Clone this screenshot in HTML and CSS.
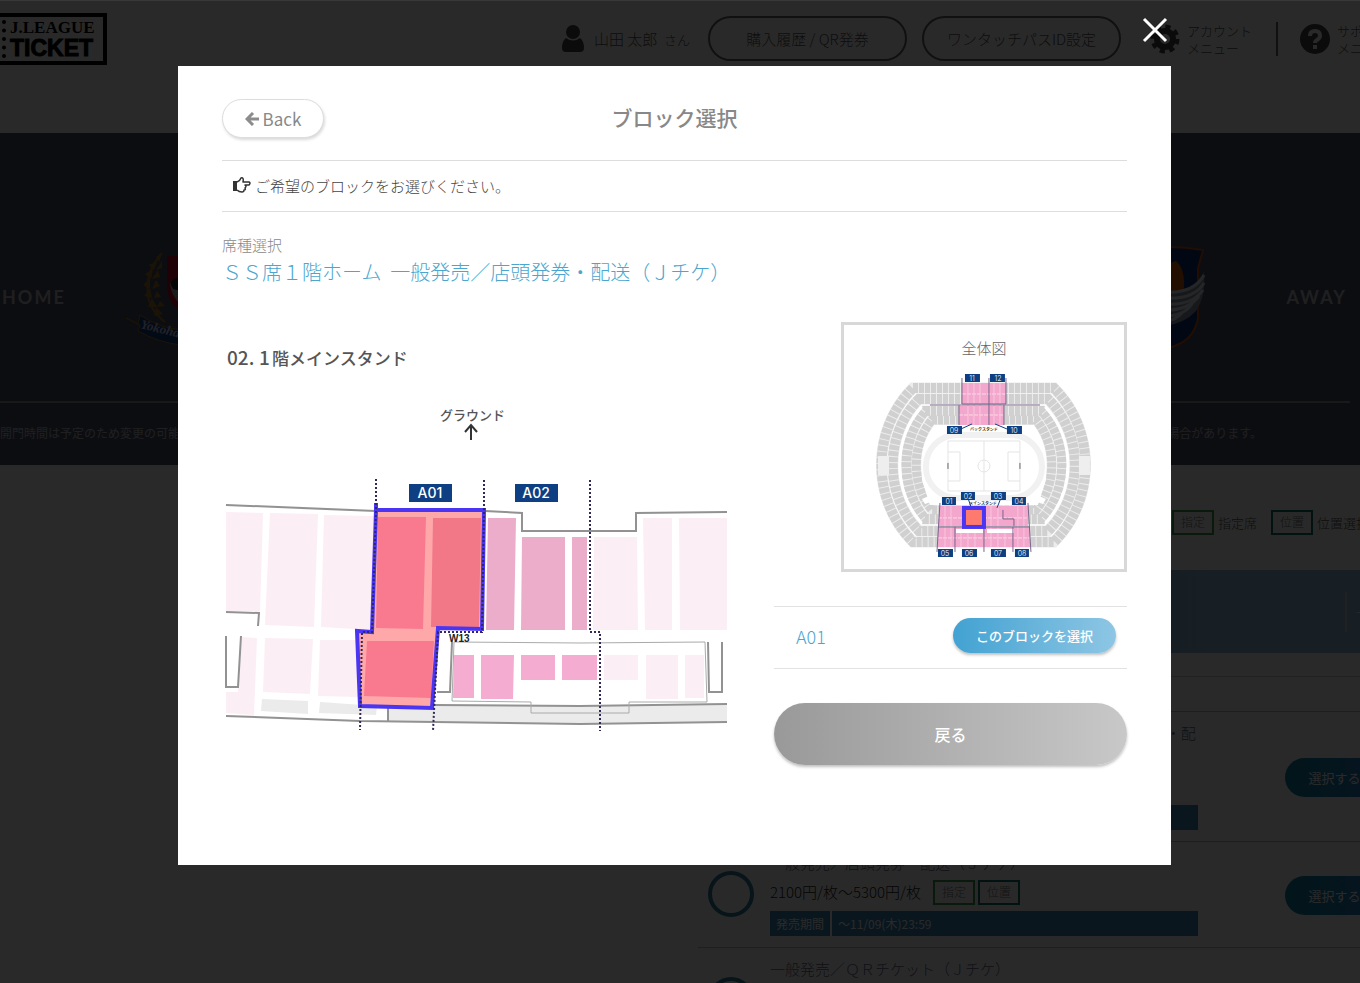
FILE: index.html
```html
<!DOCTYPE html>
<html lang="ja">
<head>
    <meta charset="UTF-8">
    <meta name="viewport" content="width=device-width, initial-scale=1.0">
    <title>ブロック選択</title>
    <link rel="stylesheet" href="styles.css">
</head>
<body>
    <div class="page">
        <header class="header">
            <a class="logo" href="#">
                <span class="logo-dots"></span>
                <span class="logo-text">
                    <span class="logo-top">J.LEAGUE</span>
                    <span class="logo-bottom">TICKET</span>
                </span>
            </a>
            <nav class="menu">
                <span class="user">
                    <svg width="22" height="28" viewBox="0 0 22 28"><circle cx="11" cy="7" r="7"/><path d="M4 13Q11 18 18 13Q22 16 22 23Q22 27 18 27H4Q0 27 0 23Q0 16 4 13Z"/></svg>
                    <span>山田 太郎&nbsp; <small>さん</small></span>
                </span>
                <a class="pill" href="#">購入履歴 / QR発券</a>
                <a class="pill" href="#">ワンタッチパスID設定</a>
                <a class="menu-item account" href="#">
                    <svg width="30" height="30" viewBox="0 0 30 30"><circle cx="15" cy="15" r="8" fill="none" stroke="#444" stroke-width="6"/><circle cx="15" cy="15" r="12" fill="none" stroke="#444" stroke-width="5" stroke-dasharray="5 4.42"/></svg>
                    <span>アカウント<br>メニュー</span>
                </a>
                <a class="menu-item support" href="#">
                    <svg width="30" height="30" viewBox="0 0 30 30"><circle cx="15" cy="15" r="15"/><path d="M10 12Q10 7 15 7T20 12Q20 14 17 16Q15 17 15 19" fill="none" stroke="#fff" stroke-width="4"/><path d="M13 21h4v4h-4z" fill="#fff"/></svg>
                    <span>サポート<br>メニュー</span>
                </a>
            </nav>
        </header>

        <section class="match">
            <div class="teams">
                <div class="team">
                    <span class="team-side">HOME</span>
                    <svg width="100" height="96" viewBox="125 250 100 96">
                        <path d="M161 254C142 275 140 305 164 323" fill="none" stroke="#a87820" stroke-width="2"/>
                        <path d="M161 254l-6 4 3 5zM156 262l-8 4 5 5zM152 270l-8 5 6 5zM149 279l-7 7 7 4zM149 289l-6 8 8 2zM151 299l-4 9 9 0zM155 308l-2 9 9-2zM161 262l0 7-6 2zM157 271l2 7-8 2zM155 281l4 6-8 3zM156 292l4 6-7 1zM159 302l5 5-8 1z" fill="#a87820"/>
                        <path d="M166 257h38v30q0 20-19 28q-19-8-19-28z" fill="#c4102a"/>
                        <path d="M169 285q16-14 32 0q-2 16-16 24q-14-8-16-24z" fill="#aaa"/>
                        <circle cx="176" cy="285" r="6" fill="#222"/>
                        <path d="M125 319l12 6 2-9q40 27 80 4l6 20q-45 16-88-8l2-6z" fill="#10408c" stroke="#a87820"/>
                        <text x="139" y="329" transform="rotate(14 139 329)" class="ribbon">Yokohama</text>
                    </svg>
                </div>
                <div class="team">
                    <svg width="76" height="106" viewBox="1130 248 76 106">
                        <path d="M1134 254q34-6 69 0l-5 18v50q-4 24-30 30q-28-6-30-30v-50z" fill="#0c2c78" stroke="#c85018" stroke-width="2"/>
                        <path d="M1160 270l16-5q12 10 6 40l-14 16z" fill="#d86010"/>
                        <path d="M1164 296Q1194 296 1204 276Q1206 300 1196 315Q1184 328 1164 330Z" fill="#8c98a8"/>
                        <g fill="none" stroke="#e0e8f0" stroke-width="3"><path d="M1164 296q30 2 40-17M1164 302q30 2 40-15M1164 308q28 2 39-14M1164 314q24 1 35-14M1164 320q20 0 28-12M1164 326q12-2 18-9"/></g>
                    </svg>
                    <span class="team-side">AWAY</span>
                </div>
            </div>
            <div class="match-notes">
                <span>開門時間は予定のため変更の可能</span>
                <span>場合があります。</span>
            </div>
        </section>

        <main class="tickets">
            <div class="legend">
                <span class="chip chip-seat">指定</span><span class="legend-text">指定席</span>
                <span class="chip chip-pos">位置</span><span class="legend-text">位置選択</span>
            </div>
            <div class="band"><span>＋</span></div>
            <div class="spacer"></div>

            <div class="ticket">
                <input type="radio" name="ticket" id="ticket1">
                <div class="ticket-body">
                    <label class="ticket-name" for="ticket1">ＳＳ席１階ホーム／ＳＳ席２階ホーム&nbsp;&nbsp;一般発売／店頭発券・配送（Ｊチケ）</label>
                    <div class="ticket-price">2100円/枚～5300円/枚 <span class="chip chip-seat">指定</span><span class="chip chip-pos">位置</span></div>
                    <div class="period"><span>発売期間</span><span>～11/09(木)23:59</span></div>
                </div>
                <button class="select-button">選択する</button>
            </div>

            <div class="ticket">
                <input type="radio" name="ticket" id="ticket2">
                <div class="ticket-body">
                    <label class="ticket-name" for="ticket2">一般発売／店頭発券・配送（Ｊチケ）</label>
                    <div class="ticket-price">2100円/枚～5300円/枚 <span class="chip chip-seat">指定</span><span class="chip chip-pos">位置</span></div>
                    <div class="period"><span>発売期間</span><span>～11/09(木)23:59</span></div>
                </div>
                <button class="select-button">選択する</button>
            </div>

            <div class="ticket">
                <input type="radio" name="ticket" id="ticket3">
                <div class="ticket-body">
                    <label class="ticket-name" for="ticket3">一般発売／ＱＲチケット（Ｊチケ）</label>
                    <div class="ticket-price">2100円/枚～5300円/枚</div>
                    <div class="period"><span>発売期間</span><span>～11/09(木)23:59</span></div>
                </div>
            </div>
        </main>
    </div>

    <div class="overlay">
        <div class="modal" role="dialog" aria-labelledby="modal-title">
            <button class="close" aria-label="閉じる">
                <svg width="26" height="26" viewBox="0 0 26 26"><path d="M2 2L24 24M24 2L2 24" stroke="#fff" stroke-width="3"/></svg>
            </button>

            <div class="modal-header">
                <button class="back">
                    <svg width="14" height="14" viewBox="0 0 14 14"><path d="M8 1L2 7L8 13M2 7H14" fill="none" stroke="#8c8c8c" stroke-width="3"/></svg>
                    Back
                </button>
                <h1 id="modal-title">ブロック選択</h1>
            </div>

            <p class="notice">
                <svg width="18" height="16" viewBox="0 0 18 16"><path d="M0 4h4v10H0z" fill="#333"/><path d="M4 5Q7 4 8 1Q11 0 10 5H16Q18 6 16 8H12Q14 9 12 11Q13 13 11 13Q11 15 9 15Q6 15 4 13" fill="none" stroke="#333" stroke-width="1.5" stroke-linejoin="round"/></svg>
                ご希望のブロックをお選びください。
            </p>

            <p class="seat-label">席種選択</p>
            <h2 class="seat-name">ＳＳ席１階ホーム&nbsp; 一般発売／店頭発券・配送（Ｊチケ）</h2>

            <div class="content">
                <!-- stand map -->
                <svg class="stand-map" viewBox="222 322 505 418">
                    <g class="map-text">
                        <text x="227" y="365" font-size="19">02.</text>
                        <text x="259" y="365" font-size="19">1</text>
                        <text x="272" y="365" font-size="17">階メインスタンド</text>
                        <text x="440" y="420" font-size="13">グラウンド</text>
                    </g>
                    <path d="M471 440V426M465 432L471 425L477 432" fill="none" stroke="#333" stroke-width="2"/>

                    <g fill="#fceef5">
                        <path d="M226 512L263 513L260 611H226Z"/>
                        <path d="M270 513L318 514L314 627L265 625Z"/>
                        <path d="M324 515L374 516L371 630L321 627Z"/>
                        <path d="M242 637L257 638L254 715L226 713V692H238Z"/>
                        <path d="M265 638L313 639L310 694L263 692Z"/>
                        <path d="M320 640H357L358 697L318 696Z"/>
                        <path d="M594 537H637L638 630H593Z"/>
                        <path d="M643 518H672V630H645Z"/>
                        <path d="M679 518H727V630H680Z"/>
                        <path d="M604 655H638V680H604Z"/>
                        <path d="M646 655H678V699H646Z"/>
                        <path d="M685 655H704V698H685Z"/>
                    </g>
                    <g fill="#ebebeb">
                        <path d="M262 699L308 701V714L261 711Z"/>
                        <path d="M320 702L377 706L376 715L319 713Z"/>
                        <path d="M388 703L434 705L580 706L727 704V722L580 724L388 722Z"/>
                    </g>
                    <g fill="#ebadca">
                        <path d="M488 518H516L514 630H486Z"/>
                        <path d="M522 537H565V630H521Z"/>
                        <path d="M572 537H587V630H572Z"/>
                    </g>
                    <g fill="#f5acd1">
                        <path d="M454 655H474V698H453Z"/>
                        <path d="M481 655H514L513 699H481Z"/>
                        <path d="M521 655H555V680H521Z"/>
                        <path d="M562 655H597V680H562Z"/>
                    </g>

                    <g fill="none" stroke="#929292" stroke-width="2">
                        <path d="M226 505L376 511H485L522 513V531H636V513L727 512"/>
                        <path d="M226 612L259 613L258 626M226 636V687H238L241 636"/>
                        <path d="M226 716L360 721L580 724L727 722"/>
                        <path d="M388 721V704M434 705L580 706L727 704"/>
                        <path d="M437 692H450L452 642M708 642L709 692H722V642"/>
                        <path d="M454 642L580 643L705 642L707 702H629V713H531V702L452 701Z" stroke="#aaa" stroke-width="1"/>
                    </g>

                    <path d="M376 510L484 510L482 629L438 628L432 708L360 706L357 631L372 632Z" fill="#ffa8aa"/>
                    <path d="M378 517H426L423 629L376 628Z" fill="#f9798f"/>
                    <path d="M433 518H481L479 627H431Z" fill="#f27888"/>
                    <path d="M367 641H434L431 698L364 696Z" fill="#f9798f"/>
                    <path d="M376 503L376 510H484L482 629L438 628L432 708L360 706L357 631L372 632L376 510" fill="none" stroke="#4a35f2" stroke-width="4"/>
                    <g fill="none" stroke="#302858" stroke-width="2" stroke-dasharray="2 2">
                        <path d="M376 479V510L372 632H362L360 730"/>
                        <path d="M484 480V510L482 632H438L433 731"/>
                        <path d="M590 480V632H600V731"/>
                    </g>

                    <path d="M409 484h43v18h-43zM515 484h43v18h-43z" fill="#0e3f82"/>
                    <text class="block-name" x="430" y="498">A01</text>
                    <text class="block-name" x="536" y="498">A02</text>
                    <text class="gate" x="449" y="642">W13</text>
                </svg>

                <div class="side">
                    <div class="overview">
                        <h3>全体図</h3>
                        <svg viewBox="844 370 280 192">
                            <g fill="none" stroke="#ececec">
                                <path d="M913 388H1054C1096 430 1096 500 1054 542H913C871 500 871 430 913 388Z" stroke-width="11"/>
                                <path d="M919 399H1048C1084 435 1084 495 1048 531H919C884 495 884 435 919 399Z" stroke-width="11"/>
                                <path d="M925 411H1042C1069 440 1069 490 1042 519H925C900 490 900 440 925 411Z" stroke-width="11"/>
                                <path d="M932 420H1036C1057 445 1057 485 1036 510H932C911 485 911 445 932 420Z" stroke-width="10"/>
                            </g>
                            <g fill="none" stroke="#d0d0d0" stroke-dasharray="5 1">
                                <path d="M913 388H1054C1096 430 1096 500 1054 542H913C871 500 871 430 913 388Z" stroke-width="10"/>
                                <path d="M919 399H1048C1084 435 1084 495 1048 531H919C884 495 884 435 919 399Z" stroke-width="10"/>
                                <path d="M925 411H1042C1069 440 1069 490 1042 519H925C900 490 900 440 925 411Z" stroke-width="10"/>
                                <path d="M932 420H1036C1057 445 1057 485 1036 510H932C911 485 911 445 932 420Z" stroke-width="9"/>
                            </g>
                            <path d="M922 407C893 440 893 490 922 523M1045 407C1075 440 1075 490 1045 523" fill="none" stroke="#fff" stroke-width="2"/>
                            <path d="M936 426H1034L1046 460V480L1038 505H930L922 480V460Z" fill="#fff"/>
                            <rect x="926" y="435" width="116" height="63" rx="31" fill="none" stroke="#f1f1f1" stroke-width="6"/>
                            <g fill="none" stroke="#e4e4e4">
                                <path d="M948 441H1020V491H948ZM984 441V491M948 452H960V481H948M1020 452H1008V481H1020"/>
                                <circle cx="984" cy="466" r="6"/>
                            </g>
                            <path d="M948 463V469M1020 463V469" stroke="#666"/>
                            <path d="M878 456H889V475H878ZM1079 456H1090V475H1079Z" fill="#eee"/>
                            <path d="M922 499L931 495L934 501L925 504ZM1034 501L1037 495L1046 499L1043 504Z" fill="#fff"/>

                            <path d="M962 383H1006V404H962ZM959 406H1004V425H959ZM940 506H1028V526H938ZM938 527H1030V547H937Z" fill="#f3a7cd"/>
                            <path d="M962 394H1006M959 415H1004M938 518H1029M938 538H1030" stroke="#fbdcea" stroke-dasharray="4 1"/>
                            <path d="M968 383V425M974 383V425M980 383V425M994 383V425M1000 383V425M945 506V547M951 506V547M961 530V547M968 530V547M975 530V547M991 506V547M998 506V547M1005 530V547M1018 506V547M1024 506V547" stroke="#f9c6df"/>
                            <path d="M956 529H983V533H956ZM987 529H1014V533H987Z" fill="#fff"/>
                            <path d="M962 378V404H1006V378M959 405V425M989 378V425M1004 405V425M930 405H1040M940 503L937 552M938 527H1030M1028 503L1031 552M955 527V552M984 527V552M1013 527V552M1003 510V519H1014V526" fill="none" stroke="#77658a"/>
                            <path d="M961 429L972 424M1007 429L995 424M968 498L971 507M1001 498L997 508" stroke="#0e3f82"/>
                            <path d="M965 374h15v8h-15zM990 374h15v8h-15zM947 426h15v8h-15zM1007 426h15v8h-15zM942 497h14v8h-14zM961 492h14v8h-14zM991 492h15v8h-15zM1012 497h14v8h-14zM938 549h15v8h-15zM962 549h15v8h-15zM991 549h15v8h-15zM1015 549h14v8h-14z" fill="#0e3f82"/>
                            <g class="area-name">
                                <text x="972" y="381">11</text>
                                <text x="998" y="381">12</text>
                                <text x="954" y="433">09</text>
                                <text x="1014" y="433">10</text>
                                <text x="949" y="504">01</text>
                                <text x="968" y="499">02</text>
                                <text x="998" y="499">03</text>
                                <text x="1019" y="504">04</text>
                                <text x="945" y="556">05</text>
                                <text x="969" y="556">06</text>
                                <text x="998" y="556">07</text>
                                <text x="1022" y="556">08</text>
                            </g>
                            <g class="stand-name">
                                <text x="984" y="431">バックスタンド</text>
                                <text x="983" y="505">メインスタンド</text>
                            </g>
                            <rect x="964" y="508" width="20" height="19" fill="#ff7a6e" stroke="#4a35f2" stroke-width="4"/>
                        </svg>
                    </div>

                    <div class="block-row">
                        <span class="block-id">A01</span>
                        <button class="choose">このブロックを選択</button>
                    </div>
                    <button class="return">戻る</button>
                </div>
            </div>
        </div>
    </div>
</body>
</html>
```
FILE: styles.css
```css
* {
    box-sizing: border-box;
    margin: 0;
    padding: 0;
}

body {
    position: relative;
    height: 100vh;
    overflow: hidden;
    font-family: "Noto Sans CJK JP", sans-serif;
    font-weight: 300;
    font-size: 15px;
    color: #555;
    background: #fff;
}

a {
    color: inherit;
    text-decoration: none;
}

button {
    border: none;
    font-family: inherit;
    cursor: pointer;
}

.page {
    height: 100%;
    overflow: hidden;
}

/* header */
.header {
    display: flex;
    justify-content: space-between;
    align-items: flex-start;
    height: 133px;
    padding-top: 13px;
}

.logo {
    display: flex;
    gap: 4px;
    width: 127px;
    height: 52px;
    margin-left: -20px;
    padding: 3px 0 0 18px;
    border: 4px solid #000;
    color: #000;
}

.logo-dots {
    width: 4px;
    height: 38px;
    border-left: 4px dotted #000;
}

.logo-top,
.logo-bottom {
    display: block;
    font-weight: bold;
}

.logo-top {
    font-family: "Liberation Serif", serif;
    font-size: 17px;
    line-height: 15px;
}

.logo-bottom {
    font-family: "Liberation Sans", sans-serif;
    font-size: 23px;
    line-height: 26px;
    -webkit-text-stroke: 1px #000;
}

.menu {
    display: flex;
    align-items: center;
    margin: 3px -29px 0 0;
    white-space: nowrap;
    fill: #444;
}

.user {
    display: flex;
    align-items: center;
    gap: 10px;
    margin-right: 18px;
}

.user small {
    font-size: 13px;
}

.pill {
    width: 199px;
    height: 45px;
    margin-right: 15px;
    border: 2px solid #666;
    border-radius: 23px;
    line-height: 41px;
    text-align: center;
}

.menu-item {
    display: flex;
    align-items: center;
    gap: 7px;
    font-size: 13px;
    line-height: 17px;
}

.account {
    margin-left: 14px;
    padding-right: 24px;
    border-right: 2px solid #666;
}

.support {
    margin-left: 22px;
}

/* match */
.match {
    height: 332px;
    background: #4d5368;
    color: #c0c0c8;
}

.teams {
    display: flex;
    justify-content: space-between;
    align-items: center;
    height: 270px;
    margin-right: 10px;
    padding: 60px 3px 0 2px;
    border-bottom: 2px solid #999;
}

.team {
    display: flex;
    align-items: center;
    gap: 60px;
}

.team:last-child {
    gap: 80px;
}

.team-side {
    font-family: Lato, sans-serif;
    font-size: 18px;
    font-weight: bold;
    letter-spacing: 2px;
}

.ribbon {
    font: italic bold 13px "Liberation Serif", serif;
    fill: #cce;
}

.match-notes {
    display: flex;
    justify-content: space-between;
    padding: 20px 98px 0 0;
    font-size: 12px;
    font-weight: 400;
    line-height: 20px;
}

/* ticket list */
.tickets {
    margin-right: -24px;
    padding-left: 698px;
}

.legend {
    display: flex;
    align-items: center;
    justify-content: flex-end;
    height: 105px;
    padding-top: 9px;
    font-size: 13px;
}

.chip {
    display: inline-block;
    width: 42px;
    height: 25px;
    border: 2px solid;
    color: #777;
    font-size: 12px;
    line-height: 20px;
    text-align: center;
}

.chip-seat {
    border-color: #3c9a4a;
}

.chip-pos {
    border-color: #10706a;
}

.legend-text {
    margin: 0 14px 0 4px;
}

.legend-text:last-child {
    margin-right: 15px;
}

.band {
    height: 83px;
    padding: 22px 0;
    background: linear-gradient(to right, #7fb4d0, #92bce0);
    color: #fff;
}

.band span {
    display: block;
    width: 39px;
    margin-left: auto;
    padding-left: 8px;
    border-left: 2px solid #ccc;
    line-height: 40px;
}

.spacer {
    height: 58px;
    background: linear-gradient(#ccc, #ccc) 0 23px / 100% 1px no-repeat;
}

.ticket {
    display: flex;
    align-items: center;
    padding: 9px 0 11px 10px;
    border-top: 1px solid #bbb;
}

.ticket input {
    appearance: none;
    flex-shrink: 0;
    width: 46px;
    height: 46px;
    margin-right: 16px;
    border: 4px solid #2c7c9c;
    border-radius: 50%;
}

.ticket-body {
    flex: 1;
    max-width: 428px;
}

.ticket-name {
    display: block;
    color: #666a88;
    line-height: 24px;
}

.ticket-price {
    display: flex;
    height: 25px;
    margin: 5px 0 6px;
    color: #222;
    line-height: 23px;
}

.ticket-price .chip-seat {
    margin: 0 3px 0 12px;
}

.period {
    display: flex;
    gap: 2px;
    color: #fff;
    font-size: 12px;
    font-weight: 400;
    line-height: 25px;
}

.period span {
    padding: 0 6px;
    background: #3889b8;
}

.period span:last-child {
    flex: 1;
}

.select-button {
    width: 99px;
    height: 39px;
    margin: 3px 0 0 auto;
    border-radius: 20px;
    background: linear-gradient(to right, #1084a4, #287cc0);
    color: #fff;
    font-size: 13px;
}

/* modal */
.overlay {
    position: absolute;
    inset: 0;
    padding: 65px 189px 0 178px;
    border-top: 1px solid #383838;
    background: rgba(0, 0, 0, 0.84);
}

.modal {
    position: relative;
    padding: 33px 44px 100px;
    background: #fff;
}

.close {
    position: absolute;
    top: -49px;
    right: 3px;
    width: 26px;
    height: 26px;
    background: none;
}

.modal-header {
    display: grid;
    grid-template-columns: 1fr auto 1fr;
    align-items: center;
    padding-bottom: 22px;
    border-bottom: 1px solid #ddd;
}

.modal-header h1 {
    padding-bottom: 4px;
    color: #888;
    font-size: 21px;
    font-weight: 500;
    line-height: 30px;
}

.back {
    width: 102px;
    height: 39px;
    border: 1px solid #ddd;
    border-radius: 20px;
    background: #fff;
    box-shadow: 1px 2px 3px rgba(0, 0, 0, 0.15);
    color: #888;
    font-size: 17px;
    line-height: 24px;
}

.notice {
    display: flex;
    align-items: center;
    gap: 4px;
    height: 51px;
    padding: 0 0 2px 11px;
    border-bottom: 1px solid #ddd;
    color: #444;
}

.seat-label {
    margin-top: 21px;
    color: #888;
    line-height: 24px;
}

.seat-name {
    color: #4ba6cf;
    font-size: 20px;
    font-weight: 300;
    line-height: 30px;
}

.content {
    display: grid;
    grid-template-columns: 505fr 353fr;
    gap: 47px;
    align-items: start;
    margin-top: 35px;
}

.stand-map {
    display: block;
    width: 100%;
}

.map-text {
    fill: #555;
    font-weight: 500;
}

.block-name {
    fill: #fff;
    font-family: Inter, sans-serif;
    font-size: 14px;
    font-weight: 500;
    text-anchor: middle;
}

.gate {
    fill: #222;
    font-family: "Liberation Sans", sans-serif;
    font-size: 10px;
    font-weight: bold;
}

.overview {
    width: 81%;
    height: 250px;
    margin-left: auto;
    padding-top: 11px;
    border: 3px solid #d8d8d8;
}

.overview h3 {
    color: #666;
    font-size: 15px;
    font-weight: 300;
    line-height: 24px;
    text-align: center;
}

.overview svg {
    display: block;
    width: 100%;
    margin-top: 10px;
}

.area-name,
.stand-name {
    text-anchor: middle;
}

.area-name {
    fill: #fff;
    font-family: Inter, sans-serif;
    font-size: 7px;
}

.stand-name {
    fill: #333;
    font-size: 4px;
    font-weight: bold;
}

.block-row {
    display: flex;
    align-items: center;
    justify-content: space-between;
    height: 63px;
    margin: 34px 0;
    padding: 0 11px 4px 22px;
    border-top: 1px solid #e2e2e2;
    border-bottom: 1px solid #e2e2e2;
}

.block-id {
    color: #4ba6cf;
    font-size: 18px;
}

.choose {
    width: 163px;
    height: 35px;
    border-radius: 18px;
    background: linear-gradient(to right, #42a2d2, #8ec6e4);
    box-shadow: 0 2px 3px rgba(0, 0, 0, 0.25);
    color: #fff;
    font-size: 13px;
    font-weight: 500;
}

.return {
    width: 100%;
    height: 62px;
    border-radius: 31px;
    background: linear-gradient(to right, #999, #c8c8c8);
    box-shadow: 0 2px 3px rgba(0, 0, 0, 0.25);
    color: #fff;
    font-size: 16px;
    font-weight: 500;
}
```
